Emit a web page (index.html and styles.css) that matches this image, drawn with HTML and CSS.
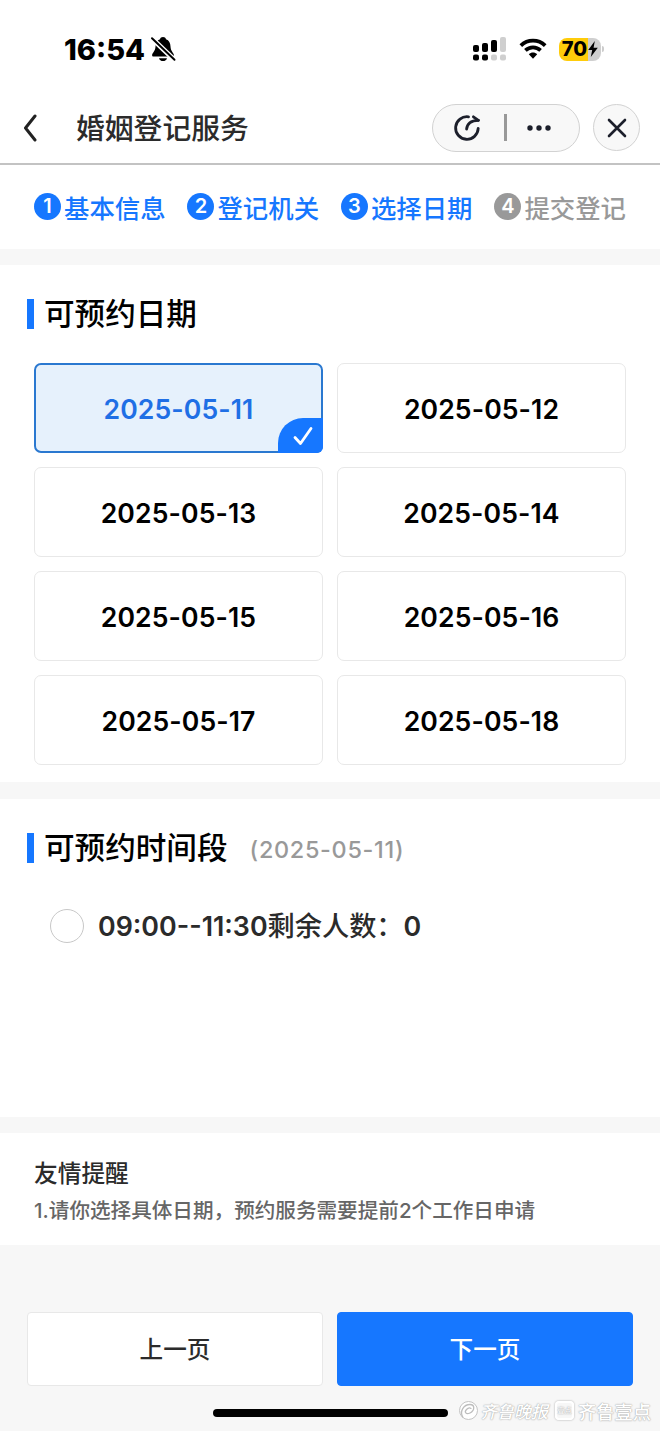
FILE: index.html
```html
<!DOCTYPE html>
<html lang="zh-CN">

<head>
    <meta charset="UTF-8">
    <meta name="viewport" content="width=device-width, initial-scale=1.0">
    <title>婚姻登记服务</title>
    <link rel="stylesheet" href="styles.css">
</head>

<body>
    <!-- Status bar -->
    <div class="status-bar">
        <div class="status-left">
            <span class="time">16:54</span>
            <svg class="bell" width="26" height="26" viewBox="0 0 26 26">
                <path d="M13 1c-1.600 0-2.700.9-3 2.200C7 4.300 5.600 7 5.500 10.500 5.400 15 2.500 16.500 2.100 19c0 1 .5 1.500 1.400 1.500h19c.9 0 1.400-.5 1.400-1.500-.4-2.500-3.300-4-3.400-8.500C20.400 7 19 4.300 16 3.200 15.700 1.900 14.600 1 13 1z" fill="#000" />
                <path d="M9 22.200h8c-.4 1.900-2 2.800-4 2.800s-3.600-.9-4-2.800z" fill="#000" />
                <path d="M1 1.500L25 24.500" stroke="#fff" stroke-width="5" />
                <path d="M2 2.300L24.500 23.800" stroke="#000" stroke-width="2" stroke-linecap="round" />
            </svg>
        </div>
        <div class="status-right">
            <svg width="33" height="24" viewBox="0 0 33 24">
                <g fill="#000">
                    <rect x="0" y="8" width="6" height="7" rx="2" />
                    <rect x="9" y="6" width="6" height="9" rx="2" />
                    <rect x="18" y="3" width="6" height="12" rx="2" />
                    <rect x="0" y="17.500" width="6" height="6" rx="2" />
                    <rect x="9" y="17.500" width="6" height="6" rx="2" />
                </g>
                <g fill="#cfcfcf">
                    <rect x="27" y="0" width="6" height="15" rx="2" />
                    <rect x="18" y="17.500" width="6" height="6" rx="2" />
                    <rect x="27" y="17.500" width="6" height="6" rx="2" />
                </g>
            </svg>
            <svg class="wifi" width="28" height="22" viewBox="0 0 28 22">
                <path d="M1.800 7.600C8.700 1 19.300 1 26.200 7.600" fill="none" stroke="#000" stroke-width="3.800" />
                <path d="M6.400 12.400c4.300-4.100 10.900-4.100 15.200 0" fill="none" stroke="#000" stroke-width="3.700" />
                <path d="M9.800 16.200c2.400-2.200 6-2.200 8.400 0L14 20.800z" fill="#000" />
            </svg>
            <div class="battery">
                <span>70</span>
                <svg width="10" height="16" viewBox="0 0 10 16">
                    <path d="M6.800 0L.2 9h4L2.800 16 9.800 6.700H5.600z" fill="#000" />
                </svg>
            </div>
            <i class="battery-cap"></i>
        </div>
    </div>

    <!-- Header -->
    <header class="header">
        <svg class="back" width="14" height="28" viewBox="0 0 14 28">
            <path d="M12 2L2.500 14 12 26" fill="none" stroke="#222" stroke-width="3" stroke-linecap="round" stroke-linejoin="round" />
        </svg>
        <h1>婚姻登记服务</h1>
        <div class="capsule">
            <svg width="28" height="28" viewBox="0 0 28 28" fill="none" stroke="#1c1f2b" stroke-width="2.800" stroke-linecap="round" stroke-linejoin="round">
                <path d="M15.500 2.800A11.300 11.300 0 1 0 25.200 14.300" />
                <path d="M13.600 15.200C14 9.500 18.500 6.500 25.400 6.300" />
                <path d="M20.400 2.800L25.400 6.300" />
            </svg>
            <i class="capsule-line"></i>
            <svg width="24" height="6" viewBox="0 0 24 6" fill="#1c1f2b">
                <circle cx="3" cy="3" r="2.700" />
                <circle cx="12" cy="3" r="2.700" />
                <circle cx="21" cy="3" r="2.700" />
            </svg>
        </div>
        <div class="close">
            <svg width="20" height="20" viewBox="0 0 20 20">
                <path d="M2 2l16 16M18 2L2 18" stroke="#1c1f2b" stroke-width="2.600" stroke-linecap="round" />
            </svg>
        </div>
    </header>

    <!-- Steps -->
    <div class="steps">
        <div class="step"><b>1</b>基本信息</div>
        <div class="step"><b>2</b>登记机关</div>
        <div class="step"><b>3</b>选择日期</div>
        <div class="step gray"><b>4</b>提交登记</div>
    </div>

    <!-- Date list -->
    <section class="dates">
        <h2>可预约日期</h2>
        <div class="date-list">
            <div class="date active">2025-05-11
                <span class="tick">
                    <svg width="20" height="20" viewBox="0 0 20 20">
                        <path d="M2 11.500L7.500 17.500 18 2.500" fill="none" stroke="#fff" stroke-width="2.800" stroke-linecap="round" stroke-linejoin="round" />
                    </svg>
                </span>
            </div>
            <div class="date">2025-05-12</div>
            <div class="date">2025-05-13</div>
            <div class="date">2025-05-14</div>
            <div class="date">2025-05-15</div>
            <div class="date">2025-05-16</div>
            <div class="date">2025-05-17</div>
            <div class="date">2025-05-18</div>
        </div>
    </section>

    <!-- Time slots -->
    <section class="times">
        <h2>可预约时间段<small>(2025-05-11)</small></h2>
        <div class="slot">
            <i class="radio"></i>
            <span class="slot-time">09:00--11:30</span><span class="slot-label">剩余人数：</span><span class="slot-time">0</span>
        </div>
    </section>

    <section class="tips">
        <h3>友情提醒</h3>
        <p>1.请你选择具体日期，预约服务需要提前2个工作日申请</p>
    </section>

    <!-- Bottom buttons -->
    <footer class="footer">
        <div class="buttons">
            <button type="button" class="btn">上一页</button>
            <button type="button" class="btn primary">下一页</button>
        </div>
        <div class="bottom">
            <i class="home-bar"></i>
            <div class="watermark">
                <svg width="21" height="21" viewBox="0 0 21 21" fill="none">
                    <circle cx="10.500" cy="10.500" r="9" fill="#fff" stroke="#c4c4c4" />
                    <path d="M5 17.500C1 11 6 4.500 12 4.500c5 0 5 6 0 8.500-4 2-6-1-3.500-3.500 2-2 4.500-2 4.500-.5" stroke="#bdbdbd" stroke-width="1.300" />
                </svg>
                <span class="brush">齐鲁晚报</span>
                <span class="badge">壹点</span>
                <span class="brand">齐鲁壹点</span>
            </div>
        </div>
    </footer>
</body>

</html>
```
FILE: styles.css
```css
* {
    box-sizing: border-box;
}

body {
    margin: 0;
    width: 660px;
    height: 1431px;
    background-color: #f7f7f7;
    font-family: Inter, "Noto Sans CJK SC", sans-serif;
    font-weight: 500;
    color: #2b2b2b;
    overflow: hidden;
}

h1,
h2,
h3,
p {
    margin: 0;
    font-weight: 500;
}

svg {
    display: block;
    flex-shrink: 0;
}

/* status bar */
.status-bar {
    display: flex;
    justify-content: space-between;
    height: 92px;
    padding: 0 56px 0 64px;
    background-color: #fff;
}

.status-left,
.status-right {
    display: flex;
    align-items: center;
    height: 98px;
}

.time {
    font-size: 29px;
    font-weight: 800;
    color: #000;
}

.bell {
    margin-left: 5px;
}

.wifi {
    margin: 0 12px 0 13px;
}

.battery {
    display: flex;
    align-items: center;
    justify-content: center;
    gap: 1px;
    width: 42px;
    height: 23px;
    border-radius: 8px;
    background: linear-gradient(90deg, #ffcc0a 70%, #cfcfcf 70%);
    color: #000;
    font-size: 20px;
    font-weight: 800;
}

.battery-cap {
    width: 2px;
    height: 6px;
    margin-left: 1px;
    border-radius: 0 2px 2px 0;
    background-color: #ccc;
}

/* header */
.header {
    display: flex;
    align-items: center;
    height: 73px;
    padding: 0 20px 0 23px;
    background-color: #fff;
    border-bottom: 2px solid #c3c3c3;
}

.header h1 {
    flex: 1;
    margin-left: 39px;
    padding-top: 2px;
    font-size: 28.8px;
    line-height: 40px;
}

.capsule {
    display: flex;
    align-items: center;
    width: 148px;
    height: 48px;
    padding-left: 20px;
    border: 1px solid #d2d2d2;
    border-radius: 24px;
    background-color: #f8f8f8;
}

.capsule-line {
    width: 3px;
    height: 27px;
    margin: 0 20px 0 23px;
    background-color: #999;
}

.close {
    display: flex;
    align-items: center;
    justify-content: center;
    width: 47px;
    height: 47px;
    margin-left: 13px;
    border: 1px solid #d2d2d2;
    border-radius: 50%;
    background-color: #f8f8f8;
}

/* steps */
.steps {
    display: flex;
    justify-content: space-between;
    height: 84px;
    padding: 0 34px 0 34px;
    background-color: #fff;
}

.step {
    display: flex;
    align-items: center;
    height: 83px;
    font-size: 25.4px;
    color: #1677ff;
}

.step b {
    width: 27px;
    height: 27px;
    margin-right: 3px;
    border-radius: 50%;
    background-color: #1677ff;
    color: #fff;
    font-size: 20px;
    font-weight: 600;
    line-height: 27px;
    text-align: center;
}

.step.gray {
    color: #999;
}

.gray b {
    background-color: #999;
}

/* sections */
section {
    margin-top: 16px;
    background-color: #fff;
}

h2 {
    display: flex;
    align-items: center;
    height: 32px;
    color: #000;
    font-size: 30.6px;
    line-height: 32px;
}

h2::before {
    content: "";
    width: 7px;
    height: 30px;
    margin-right: 10px;
    background-color: #1677ff;
}

h2 small {
    margin-left: 22px;
    padding-top: 4px;
    color: #999;
    font-size: 23.4px;
    font-weight: 500;
    letter-spacing: 0.7px;
}

.dates {
    height: 517px;
    padding: 33px 34px 0 27px;
}

.date-list {
    display: grid;
    grid-template-columns: 1fr 1fr;
    gap: 14px;
    margin: 33px 0 0 7px;
}

.date {
    display: flex;
    align-items: center;
    justify-content: center;
    position: relative;
    height: 90px;
    padding-top: 2px;
    border: 1.5px solid #e8e8e8;
    border-radius: 7px;
    color: #000;
    font-size: 26.6px;
    font-weight: 600;
    letter-spacing: 0.1px;
}

.active {
    border: 2px solid #2a78d0;
    background-color: #e6f1fc;
    color: #1f6fe5;
}

.tick {
    display: flex;
    align-items: center;
    justify-content: center;
    position: absolute;
    right: -2px;
    bottom: -2px;
    width: 45px;
    height: 35px;
    padding-left: 4px;
    border-radius: 25px 0 6px 0;
    background-color: #1677ff;
}

.times {
    height: 318px;
    margin-top: 17px;
    padding: 33px 27px 0;
}

.slot {
    display: flex;
    align-items: center;
    height: 40px;
    margin: 42px 0 0 23px;
    font-size: 27.2px;
}

.radio {
    width: 34px;
    height: 34px;
    margin-right: 14px;
    border: 1.5px solid #c8c8c8;
    border-radius: 50%;
}

.slot-time {
    font-size: 26.8px;
    font-weight: 600;
}

.slot-label {
    line-height: 36px;
    margin-top: 1px;
}

.tips {
    height: 112px;
    padding: 24px 34px 0;
}

.tips h3 {
    font-size: 23.7px;
    line-height: 34px;
}

.tips p {
    margin-top: 5px;
    color: #666;
    font-size: 20.6px;
    line-height: 30px;
    white-space: nowrap;
}

/* bottom */
.footer {
    padding: 67px 27px 0;
}

.buttons {
    display: grid;
    grid-template-columns: 1fr 1fr;
    gap: 14px;
}

.btn {
    height: 74px;
    padding: 0 0 3px;
    border: 1.5px solid #e8e8e8;
    border-radius: 4px;
    background-color: #fff;
    color: #2b2b2b;
    font: inherit;
    font-size: 23.6px;
}

.primary {
    border-color: #1677ff;
    background-color: #1677ff;
    color: #fff;
}

.bottom {
    display: flex;
    align-items: center;
    height: 45px;
    margin: 4px -20px 0 186px;
}

.home-bar {
    width: 235px;
    height: 8px;
    border-radius: 4px;
    background-color: #000;
}

.watermark {
    display: flex;
    align-items: center;
    margin: -4px 0 0 10px;
    color: #fff;
    text-shadow: 0 0 1px #999, 0 0 2px #bbb;
    white-space: nowrap;
}

.brush {
    margin-left: 1px;
    font-size: 17px;
    font-style: italic;
}

.badge {
    width: 19px;
    height: 19px;
    margin: 0 4px 0 7px;
    border: 2px solid #fff;
    border-radius: 4px;
    box-shadow: 0 0 2px #999;
    font-size: 7px;
    line-height: 15px;
    text-align: center;
}

.brand {
    font-size: 18.3px;
}
```
